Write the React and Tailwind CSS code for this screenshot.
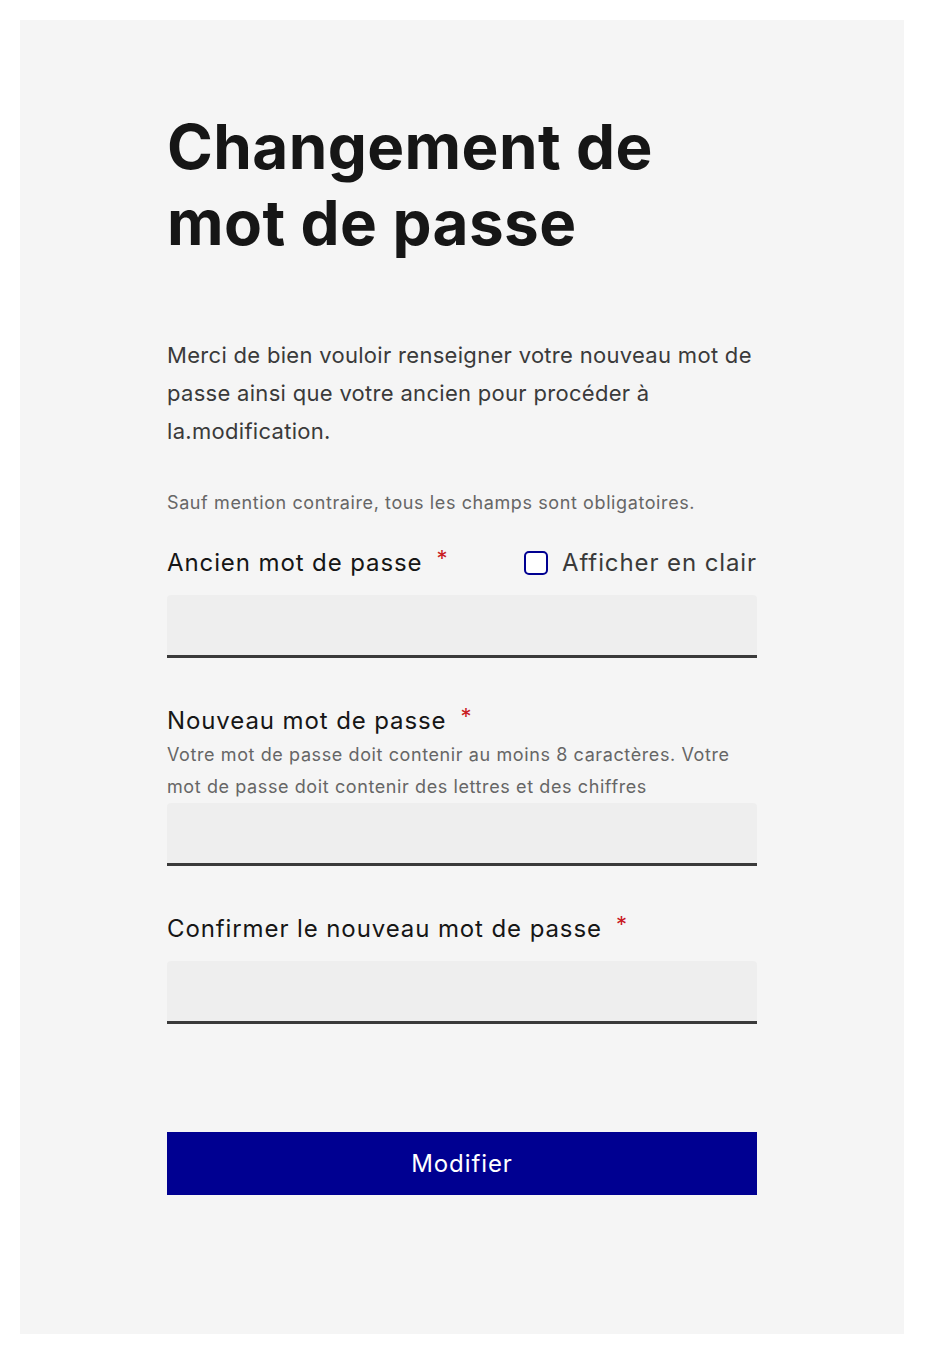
import { useState } from 'react';

const Required = () => (
  <span className="ml-[14px] align-top text-[22px] leading-none text-[#c9191e]">*</span>
);

const PasswordInput = ({ type, id }) => (
  <input
    id={id}
    type={type}
    className="block h-[63px] w-full rounded-t-[4px] border-b-[3px] border-[#3a3a3a] bg-[#eeeeee] px-4 text-[22px] text-[#161616] outline-none"
  />
);

const App = () => {
  const [showPassword, setShowPassword] = useState(false);
  const type = showPassword ? 'text' : 'password';

  return (
    <div className="min-h-[1366px] bg-white p-[20px] font-['Inter',sans-serif] text-[#161616]">
      <div className="h-[1314px] w-[884px] bg-[#f5f5f5] pt-[89px]">
        <div className="ml-[147px] w-[590px]">
          <h1 className="text-[62px] font-bold leading-[76px] tracking-[0.4px]">
            Changement de mot de passe
          </h1>

          <p className="mt-[75px] text-[22px] leading-[38px] tracking-[0.3px] text-[#3a3a3a]">
            Merci de bien vouloir renseigner votre nouveau mot de passe ainsi que votre ancien pour procéder à la.modification.
          </p>

          <p className="mt-[39px] text-[18px] leading-[28px] tracking-[0.6px] text-[#666666]">
            Sauf mention contraire, tous les champs sont obligatoires.
          </p>

          {/* Ancien mot de passe */}
          <div className="mt-[30px] flex items-center justify-between text-[24px] leading-[32px] tracking-[0.9px]">
            <label htmlFor="old">
              Ancien mot de passe
              <Required />
            </label>
            <label className="flex items-center gap-[14px] text-[#3a3a3a]">
              <input
                type="checkbox"
                checked={showPassword}
                onChange={(e) => setShowPassword(e.target.checked)}
                className="h-[24px] w-[24px] appearance-none rounded-[5px] border-2 border-[#000091] bg-white"
              />
              Afficher en clair
            </label>
          </div>
          <div className="mt-[16px]">
            <PasswordInput id="old" type={type} />
          </div>

          {/* Nouveau mot de passe */}
          <div className="mt-[47px]">
            <label htmlFor="new" className="block text-[24px] leading-[32px] tracking-[0.9px]">
              Nouveau mot de passe
              <Required />
            </label>
            <p className="mt-[2px] text-[18px] leading-[32px] tracking-[0.6px] text-[#666666]">
              Votre mot de passe doit contenir au moins 8 caractères. Votre mot de passe doit contenir des lettres et des chiffres
            </p>
            <PasswordInput id="new" type={type} />
          </div>

          {/* Confirmation */}
          <div className="mt-[47px]">
            <label htmlFor="confirm" className="block text-[24px] leading-[32px] tracking-[0.9px]">
              Confirmer le nouveau mot de passe
              <Required />
            </label>
            <div className="mt-[16px]">
              <PasswordInput id="confirm" type={type} />
            </div>
          </div>

          <button className="mt-[108px] h-[63px] w-full bg-[#000091] text-[24px] tracking-[0.9px] text-white">
            Modifier
          </button>
        </div>
      </div>
    </div>
  );
};

export default App;
